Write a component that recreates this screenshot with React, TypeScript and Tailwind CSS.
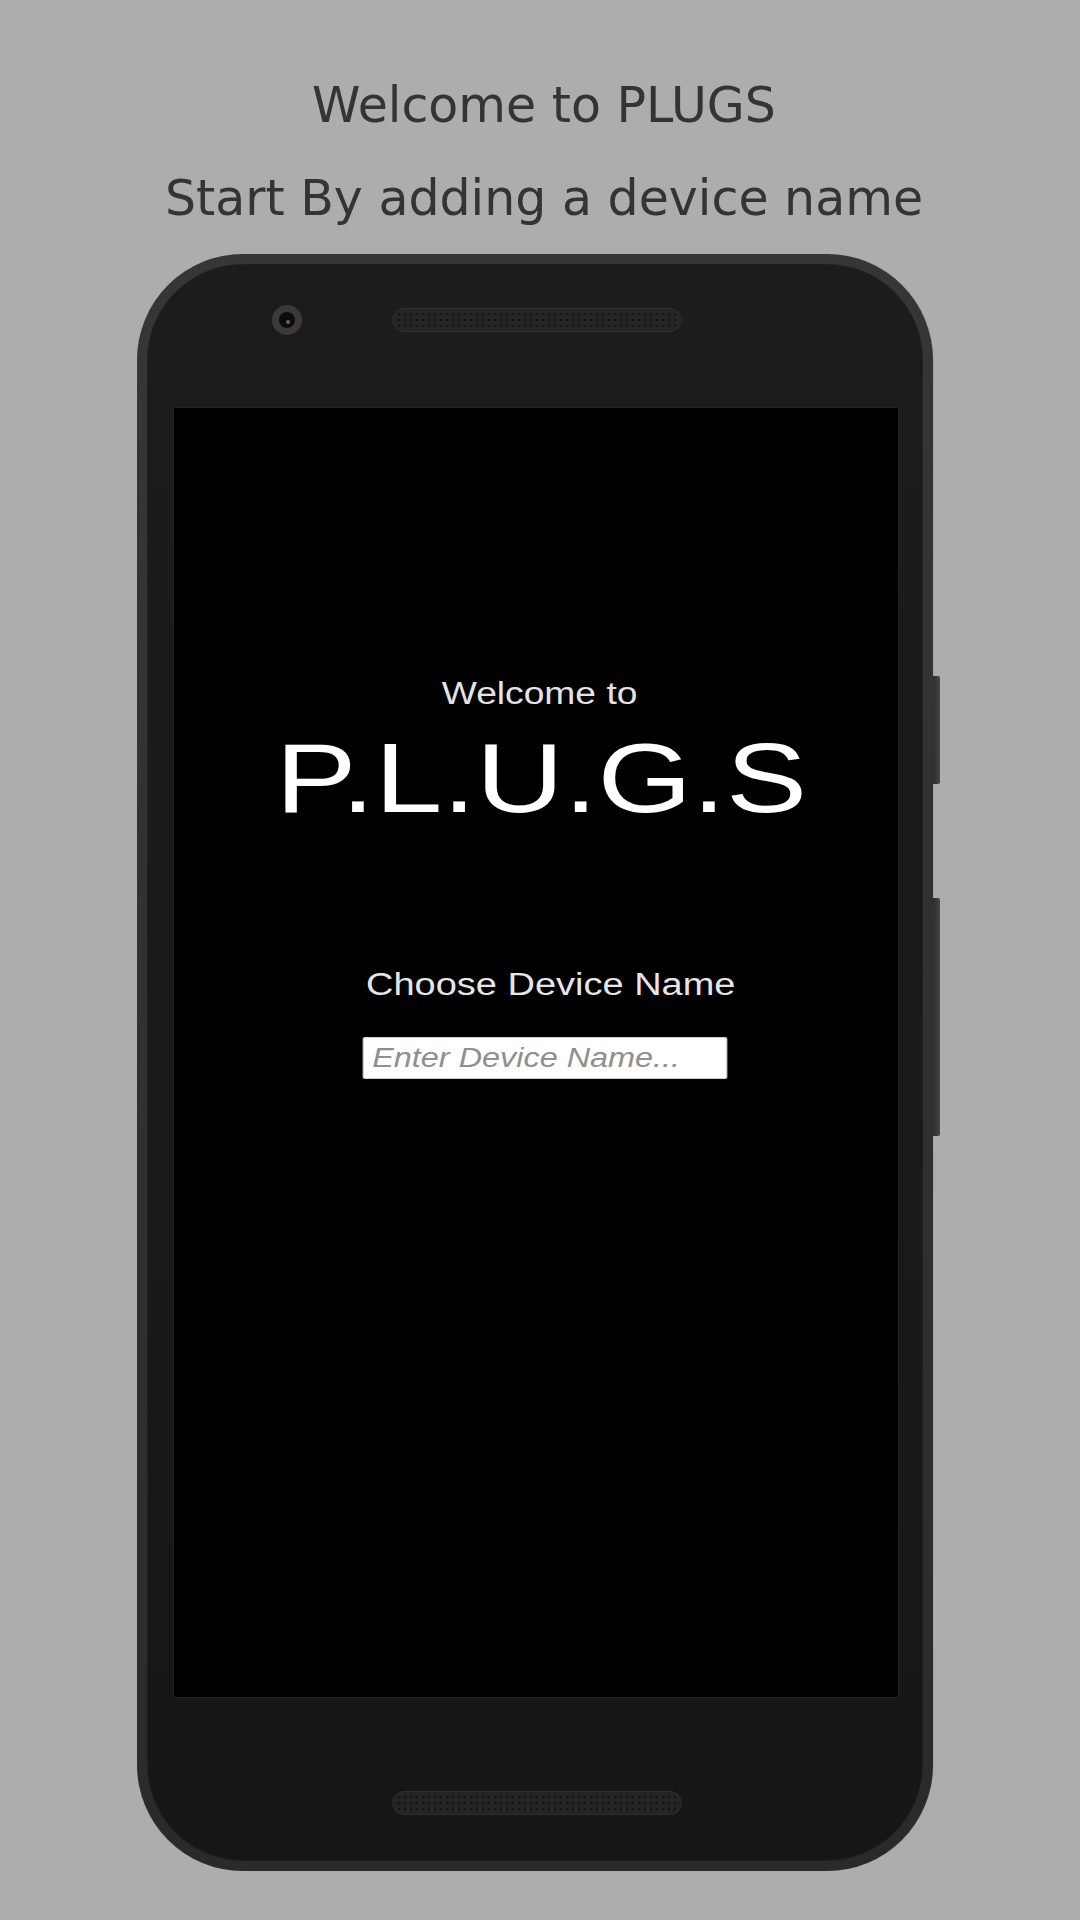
export default function App() {
  return (
    <div className="min-h-[1920px] w-[1080px] bg-[#adadad] flex flex-col overflow-hidden">
      {/* header text above the device */}
      <div className="pt-[59px] pl-[8px] text-center text-[49px] leading-[93px] text-[#343434] font-['DejaVu_Sans',sans-serif]">
        <p>Welcome to PLUGS</p>
        <p>Start By adding a device name</p>
      </div>
      <Phone />
    </div>
  );
}

const Speaker = () => (
  <div className="w-[290px] h-[24px] rounded-full border border-[#303030] bg-[#252525] bg-[radial-gradient(circle,#141414_1px,transparent_1.6px)] bg-[length:6px_6px] bg-center" />
);

const Phone = () => {
  return (
    <div className="relative mt-[9px] ml-[137px] w-[796px] h-[1617px] rounded-[106px] bg-gradient-to-b from-[#363636] to-[#2a2a2a] p-[10px] shadow-[1px_0_0_#9aa6ab]">
      {/* side buttons */}
      <div className="absolute right-[-7px] top-[422px] w-[7px] h-[108px] rounded-r-[2px] bg-gradient-to-r from-[#2f2d2d] to-[#474445]" />
      <div className="absolute right-[-7px] top-[644px] w-[7px] h-[238px] rounded-r-[2px] bg-gradient-to-r from-[#2f2d2d] to-[#474445]" />

      <div className="h-full rounded-[96px] border border-[#202020] bg-gradient-to-b from-[#1c1c1c] to-[#161616] flex flex-col">
        {/* top bezel: camera + earpiece */}
        <div className="h-[142px] flex items-start">
          <div className="flex items-center gap-[90px] pt-[40px] pl-[124px]">
            <div className="w-[30px] h-[30px] rounded-full bg-[#3a3a3a] flex items-center justify-center">
              <div className="w-[16px] h-[16px] rounded-full bg-[#0c0c0c] flex items-center justify-center">
                <div className="w-[4px] h-[4px] rounded-full bg-[#8a5a55] ml-[2px] mt-[3px]" />
              </div>
            </div>
            <Speaker />
          </div>
        </div>

        {/* screen */}
        <div className="ml-[25px] mr-[23px] h-[1291px] bg-black border border-[#1e2428] flex flex-col items-center pt-[268px] font-['Liberation_Sans',Arial,sans-serif]">
          <p className="ml-[7px] scale-x-[1.2] text-[31px] leading-[36px] text-[#e4e4e4]">Welcome to</p>
          <p className="mt-[11px] ml-[11px] scale-x-[1.24] text-[98px] leading-[110px] text-white">P.L.U.G.S</p>
          <p className="mt-[134px] ml-[30px] scale-x-[1.225] text-[31px] leading-[36px] text-[#e6e6e6]">Choose Device Name</p>
          <input
            type="text"
            placeholder="Enter Device Name..."
            className="mt-[34px] ml-[17px] scale-x-[1.2] w-[304px] h-[42px] rounded-[2px] border border-[#cfcfcf] bg-white pl-[7px] text-[27px] italic text-[#333] placeholder:text-[#8f8f8f] outline-none font-['Liberation_Sans',Arial,sans-serif]"
          />
        </div>

        {/* bottom bezel: speaker */}
        <div className="flex-1 flex items-start pl-[244px] pt-[93px]">
          <Speaker />
        </div>
      </div>
    </div>
  );
};
